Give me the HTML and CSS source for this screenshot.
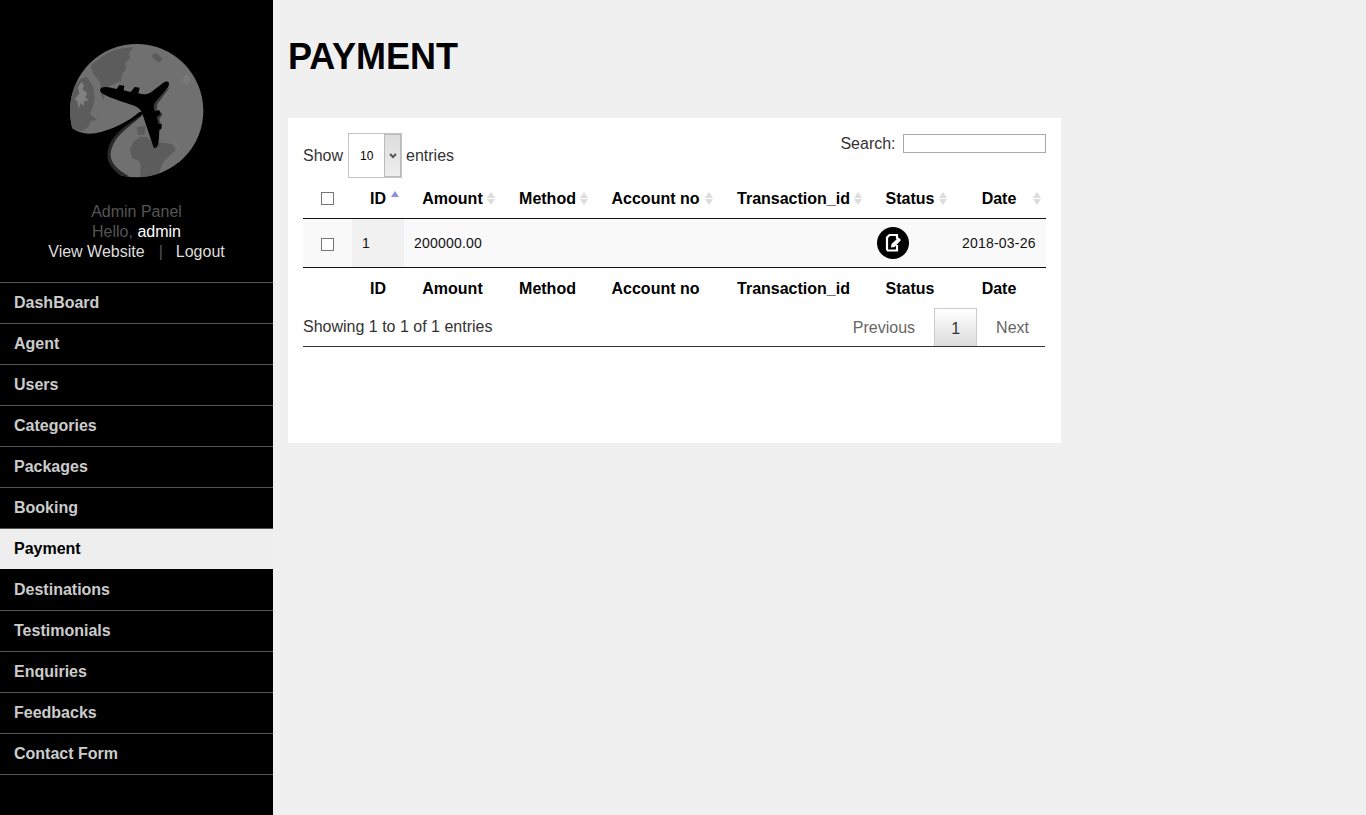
FILE: index.html
```html
<!DOCTYPE html>
<html lang="en">
<head>
    <meta charset="UTF-8">
    <title>Payment - Admin Panel</title>
    <link rel="stylesheet" href="styles.css">
</head>
<body>
    <aside class="sidebar">
        <div class="logo">
            <svg width="200" height="170" viewBox="0 0 600 510">
                <defs>
                    <clipPath id="globe"><circle cx="290" cy="242" r="200"/></clipPath>
                </defs>
                <g clip-path="url(#globe)">
                    <rect width="600" height="510" fill="#707070"/>
                    <!-- continents -->
                    <path d="M152 108 C190 70 230 52 282 52 L268 66 L270 84 L256 98 L258 118 L246 134 L244 152 L226 160 L206 170 L196 184 L190 212 L180 186 L182 160 L172 146 L160 132 Z" fill="#5c5c5c"/>
                    <path d="M122 146 L140 140 L160 170 L164 205 L158 232 L150 252 L172 270 L152 274 L146 290 L128 302 L80 300 L80 200 Z" fill="#5c5c5c"/>
                    <path d="M124 156 L132 166 L128 178 L142 190 L136 200 L146 212 L132 212 L132 228 L122 220 L116 236 L112 214 L104 208 L118 190 L114 172 Z" fill="#808080"/>
                    <path d="M334 76 L350 68 L368 86 L358 98 L344 90 Z" fill="#5c5c5c"/>
                    <path d="M290 292 L316 288 L314 314 L294 314 Z" fill="#5c5c5c"/>
                    <path d="M270 356 L280 336 L300 320 L322 322 L338 340 L366 338 L396 342 L408 360 L388 378 L370 396 L360 420 L350 460 L300 460 L302 404 L296 392 L276 384 Z" fill="#5c5c5c"/>
                    <path d="M440 130 L452 150 L438 170 L428 150 Z" fill="#787878"/>
                    <path d="M400 320 L412 350 L432 372 L410 410" fill="none" stroke="#787878" stroke-width="3"/>
                    <path d="M302 252 C255 290 212 318 205 368 C202 396 218 420 262 444" fill="none" stroke="#2a2a2a" stroke-width="14"/>
                </g>
                <!-- swoosh cut out of the globe -->
                <path d="M60 270 C110 310 135 314 165 310 C215 300 265 275 300 245 L312 250 C260 285 210 315 203 365 C198 400 220 425 275 460 L60 470 Z" fill="#000"/>
                <!-- plane, with its shadow -->
                <path d="M390 170 L352 222 L350 242 L368 252 L358 268 L366 292 L358 304 L356 352 L346 340 L330 270 L340 210 Z" fill="#3a3a3a"/>
                <path d="M184 174 C192 169 206 171 230 177 L238 165 L253 167 L251 181 L272 186 L284 171 L299 173 L295 190 C310 195 322 194 334 186 L370 158 C384 150 392 158 384 172 L346 216 C340 224 340 236 344 244 L357 240 L363 251 L350 262 L356 282 L365 282 L364 296 L357 300 C358 320 356 340 350 352 C344 358 340 352 338 344 L306 248 C300 234 288 228 274 224 C245 214 210 204 190 192 C180 186 178 179 184 174 Z" fill="#000"/>
            </svg>
        </div>
        <div class="profile">
            <div>Admin Panel</div>
            <div>Hello, <span class="name">admin</span></div>
            <div class="profile-links"><a href="#">View Website</a><span class="sep">|</span><a href="#">Logout</a></div>
        </div>
        <ul class="menu">
            <li><a href="#">DashBoard</a></li>
            <li><a href="#">Agent</a></li>
            <li><a href="#">Users</a></li>
            <li><a href="#">Categories</a></li>
            <li><a href="#">Packages</a></li>
            <li><a href="#">Booking</a></li>
            <li class="active"><a href="#">Payment</a></li>
            <li><a href="#">Destinations</a></li>
            <li><a href="#">Testimonials</a></li>
            <li><a href="#">Enquiries</a></li>
            <li><a href="#">Feedbacks</a></li>
            <li><a href="#">Contact Form</a></li>
        </ul>
    </aside>

    <main class="content">
        <h1>PAYMENT</h1>
        <section class="card">
            <div class="table-top">
                <div class="length">
                    Show
                    <span class="select-wrap">
                        <select><option>10</option><option>25</option><option>50</option></select>
                        <span class="select-btn">
                            <svg width="8" height="6" viewBox="0 0 8 6"><path d="M1 1 L4 4 L7 1" fill="none" stroke="#555" stroke-width="2"/></svg>
                        </span>
                    </span>
                    entries
                </div>
                <label class="search">Search: <input type="text"></label>
            </div>

            <table class="data">
                <colgroup>
                    <col class="c-check"><col class="c-id"><col class="c-amount"><col class="c-method">
                    <col class="c-account"><col class="c-trans"><col class="c-status"><col class="c-date">
                </colgroup>
                <thead>
                    <tr>
                        <th class="check-head"><span class="check"></span></th>
                        <th class="sort asc">ID</th>
                        <th class="sort shift-s arrow-in">Amount</th>
                        <th class="sort shift-m arrow-in">Method</th>
                        <th class="sort shift-l arrow-in">Account no</th>
                        <th class="sort shift-m arrow-in">Transaction_id</th>
                        <th class="sort shift-s">Status</th>
                        <th class="sort">Date</th>
                    </tr>
                </thead>
                <tbody>
                    <tr>
                        <td class="center"><span class="check"></span></td>
                        <td class="sorted">1</td>
                        <td>200000.00</td>
                        <td></td>
                        <td></td>
                        <td></td>
                        <td class="status-cell">
                            <a class="edit" href="#">
                                <svg width="20" height="20" viewBox="0 0 20 20">
                                    <path d="M4 17.5 V4.5 L6.5 2 H14 V6 M14 12 V17.5 H4" fill="none" stroke="#fff" stroke-width="2.2"/>
                                    <path d="M8 14.5 L8.5 11 L15.5 4.5 L18 7 L11.5 14 Z" fill="#fff"/>
                                </svg>
                            </a>
                        </td>
                        <td>2018-03-26</td>
                    </tr>
                </tbody>
                <tfoot>
                    <tr>
                        <th></th>
                        <th>ID</th>
                        <th class="shift-s">Amount</th>
                        <th class="shift-m">Method</th>
                        <th class="shift-l">Account no</th>
                        <th class="shift-m">Transaction_id</th>
                        <th class="shift-s">Status</th>
                        <th>Date</th>
                    </tr>
                </tfoot>
            </table>

            <div class="table-bottom">
                <div class="info">Showing 1 to 1 of 1 entries</div>
                <div class="paging">
                    <a href="#">Previous</a>
                    <a href="#" class="current">1</a>
                    <a href="#">Next</a>
                </div>
            </div>
        </section>
    </main>
</body>
</html>
```

FILE: styles.css
```css
body {
    margin: 0;
    min-height: 815px;
    display: flex;
    font-family: "Liberation Sans", Arial, sans-serif;
    font-size: 16px;
    background: #f0f0f0;
    color: #333;
}

a {
    text-decoration: none;
}

/* sidebar */
.sidebar {
    width: 273px;
    flex-shrink: 0;
    background: #000;
}

.logo {
    height: 170px;
    padding: 30px 0 0 40px;
}

.logo svg {
    display: block;
}

.profile {
    text-align: center;
    color: #555;
    line-height: 20px;
    margin-top: 2px;
    height: 80px;
}

.profile .name {
    color: #fff;
}

.profile-links a {
    color: #ddd;
}

.profile-links .sep {
    margin: 0 13px 0 14px;
    color: #555;
}

.menu {
    list-style: none;
    margin: 0;
    padding: 0;
    border-top: 1px solid #555;
}

.menu li {
    height: 40px;
    border-bottom: 1px solid #555;
}

.menu a {
    display: block;
    padding-left: 14px;
    line-height: 39px;
    font-weight: bold;
    color: #ccc;
}

.menu .active {
    background: #eee;
    border-bottom-color: #000;
}

.menu .active a {
    color: #000;
}

/* main area */
.content {
    flex: 1;
    padding: 0 15px;
}

h1 {
    margin: 0;
    padding-top: 36px;
    height: 82px;
    font-size: 36px;
    line-height: 41px;
    color: #000;
}

.card {
    width: 743px;
    height: 295px;
    padding: 15px;
    background: #fff;
}

.table-top {
    display: flex;
    justify-content: space-between;
    height: 45px;
}

.length {
    display: flex;
    align-items: center;
    gap: 5px;
}

.select-wrap {
    position: relative;
    display: block;
    width: 54px;
    height: 45px;
    margin-right: -1px;
}

.select-wrap select {
    appearance: none;
    width: 54px;
    height: 45px;
    box-sizing: border-box;
    padding: 0 0 0 11px;
    border: 1px solid #c4c4c4;
    background: #fff;
    font-family: "Liberation Sans", Arial, sans-serif;
    font-size: 12px;
    color: #000;
}

.select-btn {
    position: absolute;
    top: 1px;
    right: 1px;
    width: 15px;
    height: 41px;
    display: flex;
    align-items: center;
    justify-content: center;
    border: 1px solid #bbb;
    background: linear-gradient(#ddd, #eee);
}

.search {
    padding-top: 1px;
}

.search input {
    width: 141px;
    height: 17px;
    margin-left: 3px;
    padding: 0;
    border: 1px solid #aaa;
    vertical-align: 1px;
}

/* table */
.data {
    width: 743px;
    table-layout: fixed;
    border-collapse: separate;
    border-spacing: 0;
    font-size: 14px;
    letter-spacing: 0.2px;
    color: #111;
}

.c-check { width: 49px; }
.c-id { width: 52px; }
.c-amount { width: 105px; }
.c-method { width: 93px; }
.c-account { width: 125px; }
.c-trans { width: 149px; }
.c-status { width: 76px; }
.c-date { width: 94px; }

.data th {
    height: 40px;
    box-sizing: border-box;
    padding: 2px 0 0;
    font-size: 16px;
    letter-spacing: 0;
    color: #000;
    text-align: center;
    white-space: nowrap;
}

.data th.check-head {
    padding-top: 0;
}

.data th.shift-s {
    padding-right: 8px;
}

.data th.shift-m {
    padding-right: 16px;
}

.data th.shift-l {
    padding-right: 18px;
}

.data thead th {
    height: 41px;
    border-bottom: 1px solid #111;
}

.data tbody td {
    height: 48px;
    padding: 0 10px;
    background: #f9f9f9;
    border-bottom: 1px solid #111;
}

.data tbody td.center {
    padding: 0;
    text-align: center;
}

.data tbody td.sorted {
    background: #f1f1f1;
}

.check {
    display: inline-block;
    width: 11px;
    height: 11px;
    border: 1px solid #767676;
    background: #fff;
    vertical-align: middle;
}

.sort {
    position: relative;
}

.sort::before,
.sort::after {
    content: "";
    position: absolute;
    right: 5px;
    border-left: 4px solid transparent;
    border-right: 4px solid transparent;
}

.sort.arrow-in::before,
.sort.arrow-in::after {
    right: 14px;
}

.sort::before {
    top: 14px;
    border-bottom: 6px solid #ddd;
}

.sort::after {
    top: 21px;
    border-top: 6px solid #ddd;
}

.sort.asc::before {
    top: 13px;
    border-bottom-color: #8b8fdc;
}

.sort.asc::after {
    display: none;
}

.status-cell {
    text-align: left;
}

.data tbody td.status-cell {
    padding: 0 0 0 1px;
}

.edit {
    width: 32px;
    height: 32px;
    display: flex;
    align-items: center;
    justify-content: center;
    border-radius: 50%;
    background: #000;
}

/* below the table */
.table-bottom {
    display: flex;
    justify-content: space-between;
    width: 742px;
    height: 38px;
    border-bottom: 1px solid #333;
}

.info {
    padding-top: 10px;
}

.paging {
    display: flex;
}

.paging a {
    padding: 0 16px 0 19px;
    line-height: 39px;
    color: #666;
}

.paging a:first-child {
    padding-right: 19px;
}

.paging .current {
    box-sizing: border-box;
    width: 43px;
    padding: 0;
    text-align: center;
    color: #333;
    border: 1px solid #ccc;
    border-bottom: 0;
    background: linear-gradient(#fff, #dcdcdc);
}
```
